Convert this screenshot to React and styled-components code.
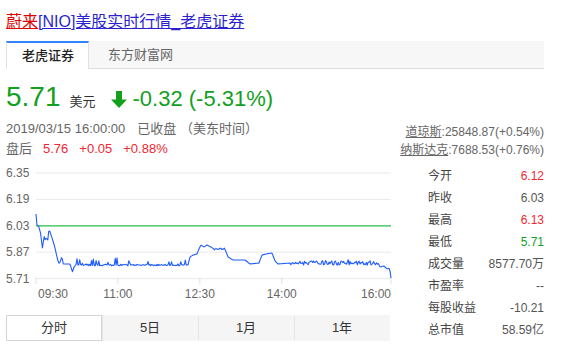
import React from 'react';
import styled, { createGlobalStyle, css } from 'styled-components';

const GREEN = '#12a01e';
const RED = '#f2262f';

const GlobalStyle = createGlobalStyle`
  body {
    margin: 0;
    background: #fff;
    color: #333;
    font-family: "Liberation Sans", Arial, "Noto Sans CJK SC", sans-serif;
  }
`;

const Card = styled.div`
  width: 538px;
  padding: 12px 0 0 6px;
`;

const Title = styled.h3`
  margin: 0;
  font-size: 16px;
  line-height: 20px;
  font-weight: normal;

  a {
    color: #2b1fcf;
    text-decoration: none;
  }
`;

const TitlePart = styled.span`
  text-decoration: underline;
  color: ${props => (props.$em ? '#dd0000' : 'inherit')};
`;

const SourceTabs = styled.div`
  display: flex;
  gap: 4px;
  height: 27px;
  margin-top: 9px;
  background: #f7f7f7;
  border-bottom: 1px solid #dddddd;
`;

const SourceTab = styled.div`
  padding: 0 15px;
  font-size: 13px;
  line-height: 27px;
  color: #666;

  ${props => props.$active && css`
    height: 28px;
    line-height: 26px;
    padding: 0 14px 0 15px;
    background: #fff;
    color: #222;
    font-weight: 500;
    border-top: 2px solid #3385ff;
    border-left: 1px solid #e2e2e2;
    border-right: 1px solid #e2e2e2;
    box-sizing: border-box;
  `}
`;

const QuoteHead = styled.div`
  display: flex;
  justify-content: space-between;
  align-items: flex-end;
  margin-top: 11px;
`;

const PriceRow = styled.div`
  display: flex;
  align-items: baseline;
  line-height: 34px;
  color: ${GREEN};
`;

const Price = styled.span`
  font-size: 28px;
`;

const Currency = styled.span`
  margin-left: 9px;
  font-size: 13px;
  color: #333;
`;

const ArrowIcon = styled.svg`
  align-self: center;
  margin: 0 6px 0 15px;
`;

const Change = styled.span`
  font-size: 22px;
`;

const MetaLine = styled.div`
  display: flex;
  gap: ${props => props.$gap || 12}px;
  font-size: 13px;
  line-height: 20px;
  color: #666;
`;

const Tone = styled.span`
  color: ${props => (props.$tone === 'up' ? RED : props.$tone === 'down' ? GREEN : 'inherit')};
`;

const Indices = styled.div`
  text-align: right;
  font-size: 12px;
  line-height: 18px;
  color: #666;
`;

const IndexName = styled.span`
  text-decoration: underline;
`;

const Body = styled.div`
  display: flex;
  justify-content: space-between;
`;

const ChartCol = styled.div`
  width: 386px;
`;

const PeriodTabs = styled.div`
  display: grid;
  grid-template-columns: repeat(4, 1fr);
  width: 384px;
  margin-top: 6px;
  background: #f5f5f5;
`;

const PeriodTab = styled.div`
  box-sizing: border-box;
  height: 26px;
  line-height: 24px;
  text-align: center;
  font-size: 13px;
  color: #333;
  border: 1px solid transparent;

  & + & {
    border-left-color: #e6e6e6;
  }

  ${props => props.$active && css`
    background: #fff;
    border-color: #d4d4d4;
  `}
`;

const Stats = styled.dl`
  width: 116px;
  margin: 6px 0 0;
  font-size: 12px;
  line-height: 22px;
`;

const StatRow = styled.div`
  display: flex;
  justify-content: space-between;
`;

const StatLabel = styled.dt`
  color: #444;
`;

const StatValue = styled.dd`
  margin: 0;
  color: ${props => (props.$tone === 'up' ? RED : props.$tone === 'down' ? GREEN : '#555')};
`;

const Footer = styled.div`
  display: flex;
  gap: 44px;
  margin-top: 6px;
  padding-left: 26px;
  font-size: 12px;
  line-height: 18px;
  color: #666;
`;

const FooterLink = styled.span`
  color: ${GREEN};
`;

// chart geometry (svg local px)
const W = 386;
const H = 146;
const PLOT_L = 30;
const PLOT_R = 385;
const GRID_TOP = 14;
const GRID_STEP = 26.4;
const LEVELS = ['6.35', '6.19', '6.03', '5.87', '5.71'];
const GRID_BOTTOM = GRID_TOP + GRID_STEP * 4;
const minX = m => PLOT_L + (m * (PLOT_R - PLOT_L)) / 390;

const TIMES = [
  ['09:30', 0, 'start'],
  ['11:00', 90, 'middle'],
  ['12:30', 180, 'middle'],
  ['14:00', 270, 'middle'],
  ['16:00', 390, 'end'],
];

// rough outline of the session, [x, y]
const KEYS = [
  [30, 55], [30.5, 65], [33, 68], [34.5, 74], [36.5, 90], [38, 77], [39.5, 82],
  [40.5, 77], [41.5, 84], [43, 70], [45, 76], [47, 82], [49, 89], [51, 98],
  [53, 105], [54.5, 102], [56, 97], [57, 105], [64, 105], [66.5, 113], [68, 108],
  [70, 106], [124, 106], [182, 106], [184, 98], [187, 96], [191, 95], [193, 90],
  [195, 86], [198, 88], [201, 86], [205, 88], [208, 90], [219, 90], [222, 98],
  [227, 101], [239, 101], [244, 105], [253, 104], [256, 96], [260, 95], [266, 94],
  [269, 102], [272, 105], [284, 104], [372, 104], [374, 108], [378, 107],
  [381, 110], [383, 109], [384, 112], [385, 119],
];

const NOISE = [
  { from: 70, to: 124, jitter: 1.6, spike: 0.28, height: 7 },
  { from: 124, to: 182, jitter: 1.4, spike: 0.12, height: 5 },
  { from: 208, to: 219, jitter: 2, spike: 0, height: 0 },
  { from: 284, to: 372, jitter: 4.5, spike: 0.05, height: 3 },
];

const buildLine = () => {
  let seed = 11;
  const rnd = () => (seed = (seed * 16807) % 2147483647) / 2147483647;
  const pts = [];
  for (let m = 0; m <= 390; m++) {
    const x = minX(m);
    let i = 0;
    while (i < KEYS.length - 2 && KEYS[i + 1][0] < x) i++;
    const [x0, y0] = KEYS[i];
    const [x1, y1] = KEYS[i + 1];
    let y = y0 + ((y1 - y0) * (x - x0)) / (x1 - x0 || 1);
    const n = NOISE.find(r => x > r.from && x < r.to);
    if (n) {
      y += (rnd() - 0.5) * n.jitter;
      if (rnd() < n.spike) y -= rnd() * n.height;
    }
    pts.push(`${x.toFixed(1)},${y.toFixed(1)}`);
  }
  // opening spike
  return `${PLOT_L},55 ${pts.join(' ')}`;
};

const LINE = buildLine();

const IntradayChart = () => (
  <svg width={W} height={H} viewBox={`0 0 ${W} ${H}`}>
    {LEVELS.map((v, i) => {
      const y = GRID_TOP + i * GRID_STEP;
      return (
        <g key={v}>
          <line x1={PLOT_L} x2={PLOT_R} y1={y} y2={y} stroke="#e9e9e9" />
          <text x="0" y={y} dominantBaseline="central" fontSize="12" fill="#666">{v}</text>
        </g>
      );
    })}
    {TIMES.map(([t, m, anchor]) => {
      const x = minX(m);
      const tx = anchor === 'start' ? x + 2 : x;
      return (
        <g key={t}>
          <line x1={x} x2={x} y1={GRID_BOTTOM - 1} y2={GRID_BOTTOM + 5} stroke="#dddddd" />
          <text x={tx} y={GRID_BOTTOM + 15} dominantBaseline="central" textAnchor={anchor} fontSize="12" fill="#666">{t}</text>
        </g>
      );
    })}
    <line x1={PLOT_L} x2={PLOT_R} y1={GRID_TOP + GRID_STEP * 2} y2={GRID_TOP + GRID_STEP * 2} stroke="#2fc24d" strokeWidth="1.3" />
    <polyline points={LINE} fill="none" stroke="#1f5cff" strokeWidth="1.1" strokeLinejoin="round" />
  </svg>
);

const STATS = [
  ['今开', '6.12', 'up'],
  ['昨收', '6.03'],
  ['最高', '6.13', 'up'],
  ['最低', '5.71', 'down'],
  ['成交量', '8577.70万'],
  ['市盈率', '--'],
  ['每股收益', '-10.21'],
  ['总市值', '58.59亿'],
];

const PERIODS = ['分时', '5日', '1月', '1年'];

export default function App() {
  return (
    <>
      <GlobalStyle />
      <Card>
        <Title>
          <a href="#nio">
            <TitlePart $em>蔚来</TitlePart>
            <TitlePart>[NIO]美股实时行情_老虎证券</TitlePart>
          </a>
        </Title>

        <SourceTabs>
          <SourceTab $active>老虎证券</SourceTab>
          <SourceTab>东方财富网</SourceTab>
        </SourceTabs>

        <QuoteHead>
          <div>
            <PriceRow>
              <Price>5.71</Price>
              <Currency>美元</Currency>
              <ArrowIcon width="16" height="17" viewBox="0 0 16 17">
                <path d="M5 0H11V8.5H16L8 17L0 8.5H5Z" fill={GREEN} />
              </ArrowIcon>
              <Change>-0.32 (-5.31%)</Change>
            </PriceRow>
            <MetaLine>
              <span>2019/03/15 16:00:00</span>
              <span>已收盘 （美东时间）</span>
            </MetaLine>
            <MetaLine $gap={11}>
              <span>盘后</span>
              <Tone $tone="up">5.76</Tone>
              <Tone $tone="up">+0.05</Tone>
              <Tone $tone="up">+0.88%</Tone>
            </MetaLine>
          </div>
          <Indices>
            <div><IndexName>道琼斯</IndexName>:25848.87(+0.54%)</div>
            <div><IndexName>纳斯达克</IndexName>:7688.53(+0.76%)</div>
          </Indices>
        </QuoteHead>

        <Body>
          <ChartCol>
            <IntradayChart />
            <PeriodTabs>
              {PERIODS.map((p, i) => (
                <PeriodTab key={p} $active={i === 0}>{p}</PeriodTab>
              ))}
            </PeriodTabs>
          </ChartCol>
          <Stats>
            {STATS.map(([label, value, tone]) => (
              <StatRow key={label}>
                <StatLabel>{label}</StatLabel>
                <StatValue $tone={tone}>{value}</StatValue>
              </StatRow>
            ))}
          </Stats>
        </Body>

        <Footer>
          <FooterLink>laohu8.com</FooterLink>
          <span>给百度提建议</span>
        </Footer>
      </Card>
    </>
  );
}
